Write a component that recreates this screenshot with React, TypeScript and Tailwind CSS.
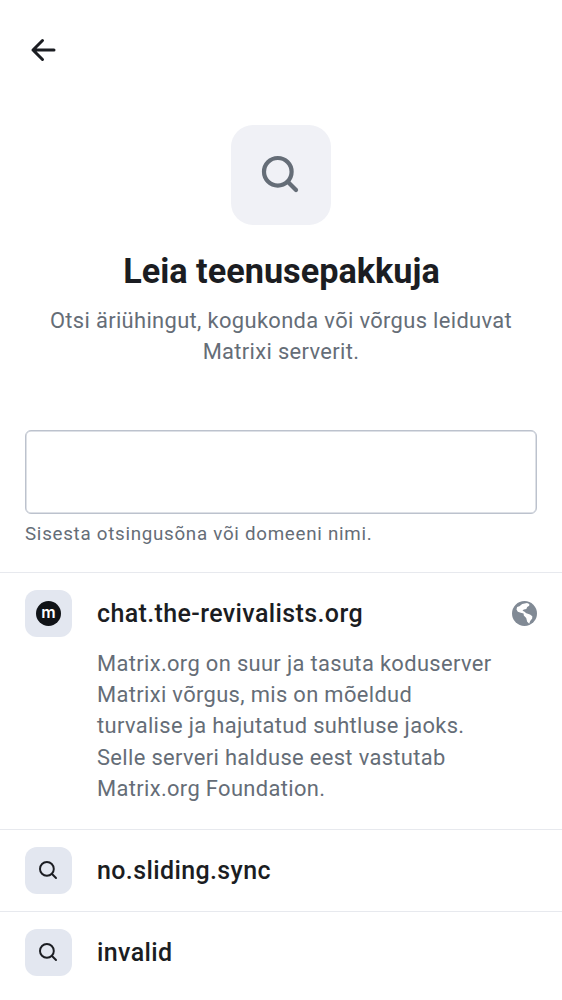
import React from "react";

function Lens({ className, stroke }: { className: string; stroke: number }) {
  return (
    <svg className={className} viewBox="0 0 50 50" fill="none" stroke="currentColor" strokeWidth={stroke} strokeLinecap="round">
      <circle cx="21.8" cy="21.8" r="13.8" />
      <path d="M32 32L40 40" />
    </svg>
  );
}

function Globe() {
  return (
    <svg className="-mr-px ml-auto mt-px size-[26px]" viewBox="0 0 26 26">
      <circle cx="12.5" cy="12.5" r="12.5" fill="#818a95" />
      <path fill="#fff" d="M10.2 3 15 1.9 17.3 2.9 17.2 4.7 15.2 6 14.3 8.1 11.8 8.5 10.5 9.7 12.2 10.5 14.3 12.2 18 13.5 20.3 15.2 20.2 17.6 18.2 20 17.2 22.8 15.2 20.8 14.2 17 11.8 14.5 11.6 12.6 8.8 11.8 5.8 10.8 4.5 8.4 5.1 6 7.4 5.3Z" />
    </svg>
  );
}

export default function App() {
  return (
    <main className="h-[1000px] w-[562px] overflow-hidden bg-white font-['Roboto',sans-serif] text-[#1b1d22]">
      <header className="flex h-[100px] items-center pl-[25px]">
        <svg className="size-[37px]" viewBox="0 0 37 37" fill="none" stroke="currentColor" strokeWidth="3" strokeLinecap="round" strokeLinejoin="round"><path d="M29 18H8M17.5 8.5 8 18l9.5 9.5" /></svg>
      </header>
      <div className="mx-auto mt-[25px] flex size-[100px] items-center justify-center rounded-[22px] bg-[#f0f1f6] text-[#656d77]">
        <Lens className="size-[50px]" stroke={4.2} />
      </div>
      <h1 className="mt-[25px] pl-px text-center text-[34.25px] leading-[42px] font-bold">Leia teenusepakkuja</h1>
      <p className="mt-[13px] text-center text-[21.9px] leading-[31.25px] tracking-[0.35px] text-[#656d77]">Otsi äriühingut, kogukonda või võrgus leiduvat<br />Matrixi serverit.</p>
      <div className="mx-[25px] mt-[62px] h-[84px] rounded-[6px] border border-[#bcc2cd] shadow-[inset_0_0_0_0.5px_#bcc2cd]" />
      <p className="mt-[8px] ml-[25px] text-[18.75px] leading-[25px] tracking-[0.72px] text-[#656d77]">Sisesta otsingusõna või domeeni nimi.</p>
      <section className="mt-[25px] h-[257px] border-t border-[#e7e9ee] px-[25px] pt-[17px]">
        <div className="flex h-[47px] items-center">
          <div className="flex size-[47px] items-center justify-center rounded-[12px] bg-[#e3e7f0]"><span className="flex size-[25px] items-center justify-center rounded-full bg-[#101317] pb-[2px] font-['Inter',sans-serif] text-[16px] leading-none font-semibold text-white">m</span></div>
          <h2 className="ml-[25px] pt-[2px] text-[25px] font-medium tracking-[0.38px]">chat.the-revivalists.org</h2>
          <Globe />
        </div>
        <p className="mt-[11.3px] ml-[72px] text-[21.9px] leading-[31.25px] tracking-[0.35px] text-[#656d77]">Matrix.org on suur ja tasuta koduserver<br />Matrixi võrgus, mis on mõeldud<br />turvalise ja hajutatud suhtluse jaoks.<br />Selle serveri halduse eest vastutab<br />Matrix.org Foundation.</p>
      </section>
      {["no.sliding.sync", "invalid"].map((name) => (
        <section key={name} className="flex h-[82px] items-center border-t border-[#e7e9ee] px-[25px] pt-px">
          <div className="flex size-[47px] items-center justify-center rounded-[12px] bg-[#e3e7f0]"><Lens className="size-[25px]" stroke={3.9} /></div>
          <h2 className="ml-[25px] pt-px text-[25px] font-medium tracking-[0.38px]">{name}</h2>
        </section>
      ))}
    </main>
  );
}
